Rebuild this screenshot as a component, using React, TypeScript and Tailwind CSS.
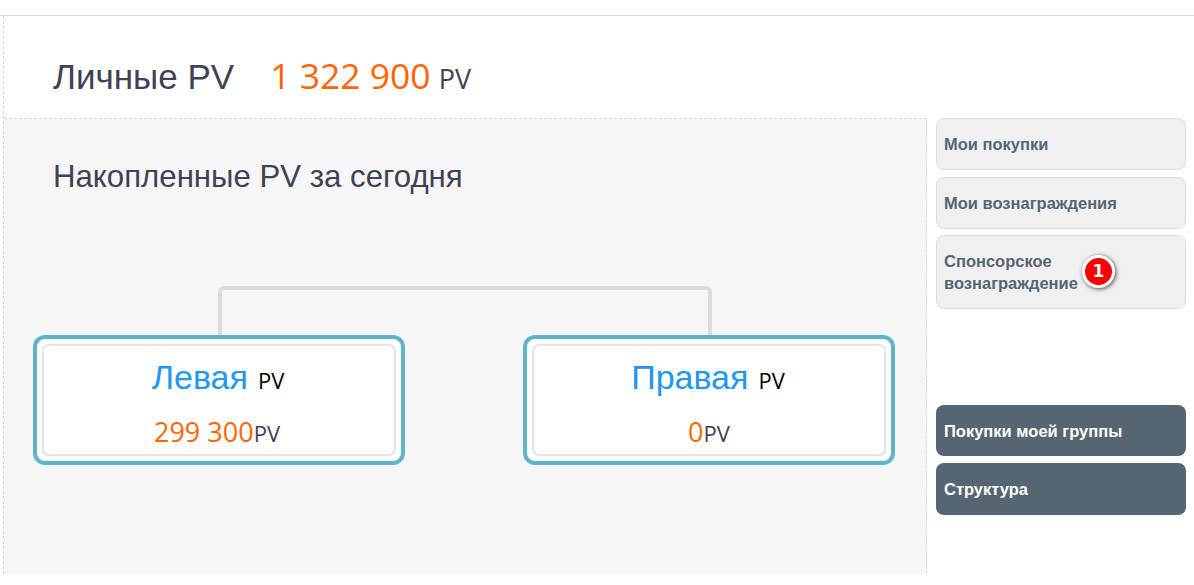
function Card({ title, value, pad }: { title: string; value: string; pad: string }) {
  return (
    <div className="w-[372px] h-[130px] rounded-[12px] border-[4px] border-[#5fb4c6] bg-white p-[5px]">
      <div className="h-full rounded-[7px] border-2 border-[#e4e4e4] flex flex-col items-center">
        <div className="mt-[9px] h-[44px] flex items-baseline leading-[44px] pr-[2px]">
          <span className="font-['Liberation_Sans',sans-serif] text-[34px] text-[#2196f3]">{title}</span>
          <span className="ml-[10px] font-['Open_Sans',sans-serif] text-[22px] text-black">PV</span>
        </div>
        <div className={"mt-[15px] h-[36px] flex items-baseline leading-[36px] font-['Open_Sans',sans-serif] " + pad}>
          <span className="text-[27px] text-[#ff6600]">{value}</span>
          <span className="text-[22px] text-[#3f4254]">PV</span>
        </div>
      </div>
    </div>
  );
}

function SideButton({ children, dark, h }: { children: React.ReactNode; dark?: boolean; h: string }) {
  return (
    <div
      className={
        "w-[250px] rounded-[8px] flex items-center font-['Liberation_Sans',sans-serif] font-bold text-[16.5px] leading-[22px] " +
        h +
        (dark ? " pl-[8px] bg-[#556672] text-white" : " pl-[7px] bg-[#f0f0f0] border border-[#dddddd] text-[#556672]")
      }
    >
      {children}
    </div>
  );
}

export default function App() {
  return (
    <div className="w-[1194px] h-[585px] bg-white overflow-hidden">
      <div className="h-[15px]" />
      <div className="border-t border-[#d9d9d9] h-[559px] flex">
        <div className="ml-[3px] w-[924px] border-l border-dashed border-[#d4d4d4] flex flex-col">
          <div className="h-[103px] border-b border-dashed border-[#d4d4d4] pl-[49px] flex items-baseline pt-[34px]">
            <span className="font-['Liberation_Sans',sans-serif] text-[35px] leading-[50px] text-[#3f4254]">Личные PV</span>
            <span className="ml-[36px] font-['Open_Sans',sans-serif] text-[35.5px] leading-[50px] text-[#ff6600]">1 322 900</span>
            <span className="ml-[8px] font-['Open_Sans',sans-serif] text-[27px] leading-[50px] text-[#3f4254]">PV</span>
          </div>
          <div className="flex-1 bg-[#f6f6f6] border-r border-dashed border-[#d4d4d4] flex flex-col">
            <div className="mt-[38px] pl-[49px] h-[40px] font-['Liberation_Sans',sans-serif] text-[31.2px] leading-[40px] text-[#3f4254]">
              Накопленные PV за сегодня
            </div>
            <div className="mt-[89px] ml-[214px] w-[494px] h-[49px] border-x-[4px] border-t-[4px] border-[#dcdcdc] rounded-t-[6px]" />
            <div className="ml-[29px] flex gap-[118px]">
              <Card title="Левая" value="299 300" pad="pr-[4px]" />
              <Card title="Правая" value="0" pad="pr-0" />
            </div>
          </div>
        </div>
        <div className="ml-[9px] pt-[102px] flex flex-col">
          <SideButton h="h-[52px]">Мои покупки</SideButton>
          <div className="h-[7px]" />
          <SideButton h="h-[52px]">Мои вознаграждения</SideButton>
          <div className="h-[6px]" />
          <SideButton h="h-[74px]">
            <span className="flex items-center">
              <span>
                Спонсорское
                <br />
                вознаграждение
              </span>
              <span className="ml-[4px] mt-[-2px] w-[33px] h-[33px] rounded-full bg-[#ff0000] border-[3px] border-white shadow-[1px_1px_4px_rgba(0,0,0,0.7)] flex items-center justify-center text-white text-[17px] font-['DejaVu_Sans',sans-serif]">
                1
              </span>
            </span>
          </SideButton>
          <div className="h-[96px]" />
          <SideButton dark h="h-[51px]">Покупки моей группы</SideButton>
          <div className="h-[7px]" />
          <SideButton dark h="h-[52px]">Структура</SideButton>
        </div>
      </div>
    </div>
  );
}
